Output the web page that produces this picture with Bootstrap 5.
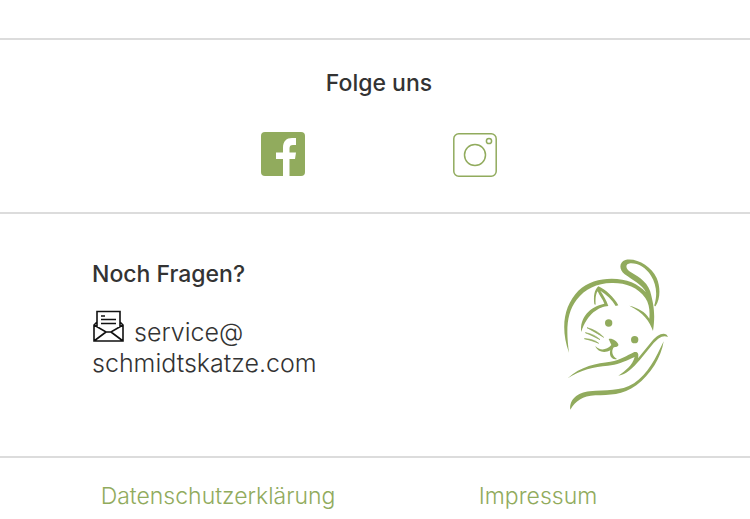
<!DOCTYPE html>
<html lang="de">
<head>
<meta charset="utf-8">
<meta name="viewport" content="width=device-width, initial-scale=1">
<title>Schmidts Katze</title>
<link href="https://cdn.jsdelivr.net/npm/bootstrap@5.3.0/dist/css/bootstrap.min.css" rel="stylesheet">
<style>
:root { --leaf: #91ab5d; }
body { font-family: Inter, "Liberation Sans", sans-serif; font-size: 23px; line-height: 31px; color: #333; background: #fff; }
svg { display: block; }
.foot-title { font-size: 23px; line-height: 32px; font-weight: 500; margin: 0; color: #333; }
.foot-band { border-top: 2px solid #dcdcdc; }
.foot-start { padding-top: 38px; }
.social { padding: 27px 0 35px 8px; }
.social-links { gap: 148px; margin-top: 33px; }
.contact { padding: 44px 78px 45px 92px; }
.mail { display: block; margin-top: 20px; font-size: 25px; font-weight: 300; color: #333; text-decoration: none; }
.mail-first { gap: 10px; }
.mail svg { width: 32px; height: 32px; margin-bottom: 6px; }
.legal { padding: 23px 52px 8px 58px; font-weight: 300; }
.legal a { color: var(--leaf); text-decoration: none; }
.leaf { color: var(--leaf); }
</style>
</head>
<body>
<footer class="foot-start">
  <section class="foot-band social text-center">
    <h2 class="foot-title">Folge uns</h2>
    <div class="social-links d-flex justify-content-center">
      <a class="leaf" href="#" aria-label="Facebook">
        <svg width="44" height="44" viewBox="0 0 44 44"><rect width="44" height="44" rx="4" fill="currentColor"/><path fill="#fff" d="M22 44V27H15V20.500H22V16C22 9 25.500 6 31 6H35V13H32C29.500 13 28.500 14 28.500 16.500V20.500H35L34 27H28.500V44Z"/></svg>
      </a>
      <a class="leaf" href="#" aria-label="Instagram">
        <svg width="44" height="45" viewBox="0 0 44 45" fill="none" stroke="currentColor" stroke-width="1.500"><rect x=".8" y="1.800" width="42.400" height="42.400" rx="5"/><circle cx="22" cy="23" r="10.500"/><circle cx="36" cy="9" r="2.600"/></svg>
      </a>
    </div>
  </section>
  <section class="foot-band contact d-flex justify-content-between align-items-start">
    <div>
      <h2 class="foot-title">Noch Fragen?</h2>
      <a class="mail" href="mailto:service@schmidtskatze.com">
        <span class="mail-first d-flex align-items-end">
          <svg viewBox="0 0 32 32" fill="none" stroke="#111" stroke-width="1.600" aria-hidden="true"><path d="M5 17V1.500H28V17M5 12L2 15V31H31V15L28 12M2 15L14 22H19L31 15M2 31L14 22M31 31L19 22M9 6H13M9 9.500H24M9 13.500H24"/></svg>
          <span>service@</span>
        </span>
        <span class="d-block">schmidtskatze.com</span>
      </a>
    </div>
    <svg class="leaf flex-shrink-0" width="110" height="153" viewBox="36 22 330 459" fill="currentColor" role="img" aria-label="Katze in einer Hand">
      <path d="M57 306C30 230 42 165 85 120C112 94 148 84 185 84C230 84 265 99 288 125C276 102 248 88 224 71C207 58 206 35 226 28C260 21 303 46 320 82C332 110 331 145 317 166C313 168 312 164 314 160C323 128 318 99 303 75C288 51 264 37 241 38C224 40 226 54 243 65C269 80 298 98 304 135C310 160 317 190 309 241C300 214 280 185 238 165C263 171 286 183 298 204C300 180 298 160 286 142C263 109 225 96 185 97C140 98 105 115 80 147C49 187 48 240 57 306Z"/>
      <path d="M133 161C130 135 133 118 145 107C168 118 191 138 205 164L197 166C186 147 170 132 151 120C160 135 169 147 175 166C148 167 110 190 94 244C88 202 119 168 163 159C158 145 149 136 143 122C137 130 136 145 137 162Z"/>
      <circle cx="176" cy="217" r="11"/><circle cx="254" cy="267" r="11"/>
      <path d="M111 231C132 236 148 246 161 260C142 248 127 240 111 231ZM106 246C125 249 140 257 150 267C134 259 121 252 106 246ZM103 264C120 264 136 269 146 278C132 272 119 268 103 264Z" stroke="currentColor" stroke-width="2"/>
      <path d="M176 265C186 262 201 271 205 281C206 290 197 288 190 291C184 302 186 315 201 325C183 329 177 312 181 299C164 308 142 304 136 286C150 301 169 299 184 283Z"/>
      <path d="M53 383C91 346 142 338 181 333C213 328 229 315 253 304C264 302 267 309 264 323L307 270C321 254 337 244 350 252L354 259C338 251 325 263 311 277L270 327C248 352 228 372 205 375C228 359 247 344 254 319C220 335 200 342 174 345C132 349 91 357 53 383Z"/>
      <path d="M341 272C334 319 302 372 259 404C218 434 178 433 136 434C97 436 77 451 61 477C57 448 82 425 119 422C168 416 211 424 252 398C293 371 317 323 341 272Z"/>
    </svg>
  </section>
  <nav class="foot-band legal row g-0 text-center" aria-label="Rechtliches">
    <div class="col-6"><a href="#">Datenschutzerklärung</a></div>
    <div class="col-6"><a href="#">Impressum</a></div>
  </nav>
</footer>
<script src="https://cdn.jsdelivr.net/npm/bootstrap@5.3.0/dist/js/bootstrap.bundle.min.js"></script>
</body>
</html>
